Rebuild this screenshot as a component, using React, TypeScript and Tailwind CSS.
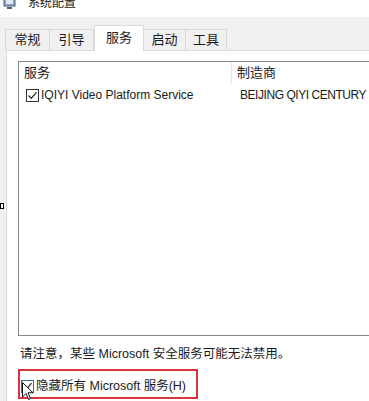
import React from "react";

function Check({ blue = false }: { blue?: boolean }) {
  return (
    <div
      className={`w-[13px] h-[13px] shrink-0 bg-white border ${blue ? "border-[#2a6fb8]" : "border-[#333333]"} flex items-center justify-center`}
    >
      <svg width="11" height="11" viewBox="0 0 11 11">
        <path d="M1.5 5.5 L4.3 8.3 L9.5 2.2" fill="none" stroke="#222" strokeWidth="1.2" />
      </svg>
    </div>
  );
}

export default function App() {
  const tabs = [
    { t: "常规", w: "w-[45px]" },
    { t: "引导", w: "w-[45px]" },
    { t: "服务", w: "w-[50px]", sel: true },
    { t: "启动", w: "w-[43px]" },
    { t: "工具", w: "w-[42px]" },
  ];
  return (
    <div className="relative w-[369px] h-[401px] overflow-hidden bg-[#f0f0f0] flex flex-col text-[#1a1a1a] font-['Liberation_Sans','Noto_Sans_CJK_SC',sans-serif]">
      {/* title bar */}
      <div className="h-[17px] bg-white overflow-hidden shrink-0">
        <div className="flex items-center gap-[12px] pl-[3px] -mt-[7px] h-[20px]">
          <svg width="13" height="14" viewBox="0 0 13 14">
            <rect x="1" y="1" width="11" height="9" fill="#8fa6c4" stroke="#4c5f7a" />
            <rect x="3" y="3" width="7" height="5" fill="#dfe8f3" />
            <rect x="4" y="11" width="5" height="2" fill="#4c5f7a" />
          </svg>
          <span className="text-[12px] leading-[20px]">系统配置</span>
        </div>
      </div>

      {/* tab strip */}
      <div className="h-[33px] shrink-0 flex items-end pl-[5px]">
        {tabs.map((tb) => (
          <div
            key={tb.t}
            className={`${tb.w} flex items-center justify-center text-[13px] border border-b-0 border-[#d9d9d9] ${
              tb.sel ? "h-[26px] bg-white relative z-10 -mb-px pb-[2px]" : "h-[21px] bg-[#f0f0f0] -ml-px first:ml-0"
            }`}
          >
            {tb.t}
          </div>
        ))}
      </div>

      {/* tab page */}
      <div className="flex-1 ml-[6px] bg-white border-t border-l border-[#d9d9d9] pt-[10px] flex flex-col">
        {/* listview */}
        <div className="ml-[11px] w-[400px] h-[275px] border border-[#828790] bg-white">
          <div className="h-[22px] flex text-[13px]">
            <div className="w-[213px] pl-[5px] flex items-center border-r border-[#e5e5e5]">服务</div>
            <div className="pl-[5px] flex items-center">制造商</div>
          </div>
          <div className="h-[22px] flex items-center text-[12px]">
            <div className="w-[213px] pl-[7px] flex items-center gap-[2px]">
              <Check />
              <span>IQIYI Video Platform Service</span>
            </div>
            <div className="pl-[8px] tracking-[-0.45px] whitespace-nowrap">BEIJING QIYI CENTURY</div>
          </div>
        </div>

        {/* note */}
        <div className="mt-[9px] pl-[13px] h-[18px] flex items-center text-[12.5px]">
          请注意，某些 Microsoft 安全服务可能无法禁用。
        </div>

        {/* red box */}
        <div className="mt-[6px] ml-[11px] w-[180px] h-[30px] border-2 border-[#d8353d] flex items-center pt-[4px]">
          <div className="ml-[1px] relative">
            <Check blue />
          </div>
          <span className="ml-[2px] text-[12.5px]">隐藏所有 Microsoft 服务(H)</span>
        </div>
      </div>

      {/* mouse cursor */}
      <svg className="absolute left-[22px] top-[382px]" width="12" height="19" viewBox="0 0 12 19">
        <path d="M0.5 0.5 L0.5 15 L4 11.5 L6.5 17.5 L8.5 16.6 L6 10.8 L11 10.8 Z" fill="white" stroke="#111" strokeWidth="1" />
      </svg>

      {/* artifact on left edge */}
      <div className="absolute left-0 top-[203px] w-[4px] h-[6px] border border-black bg-white" />
    </div>
  );
}
